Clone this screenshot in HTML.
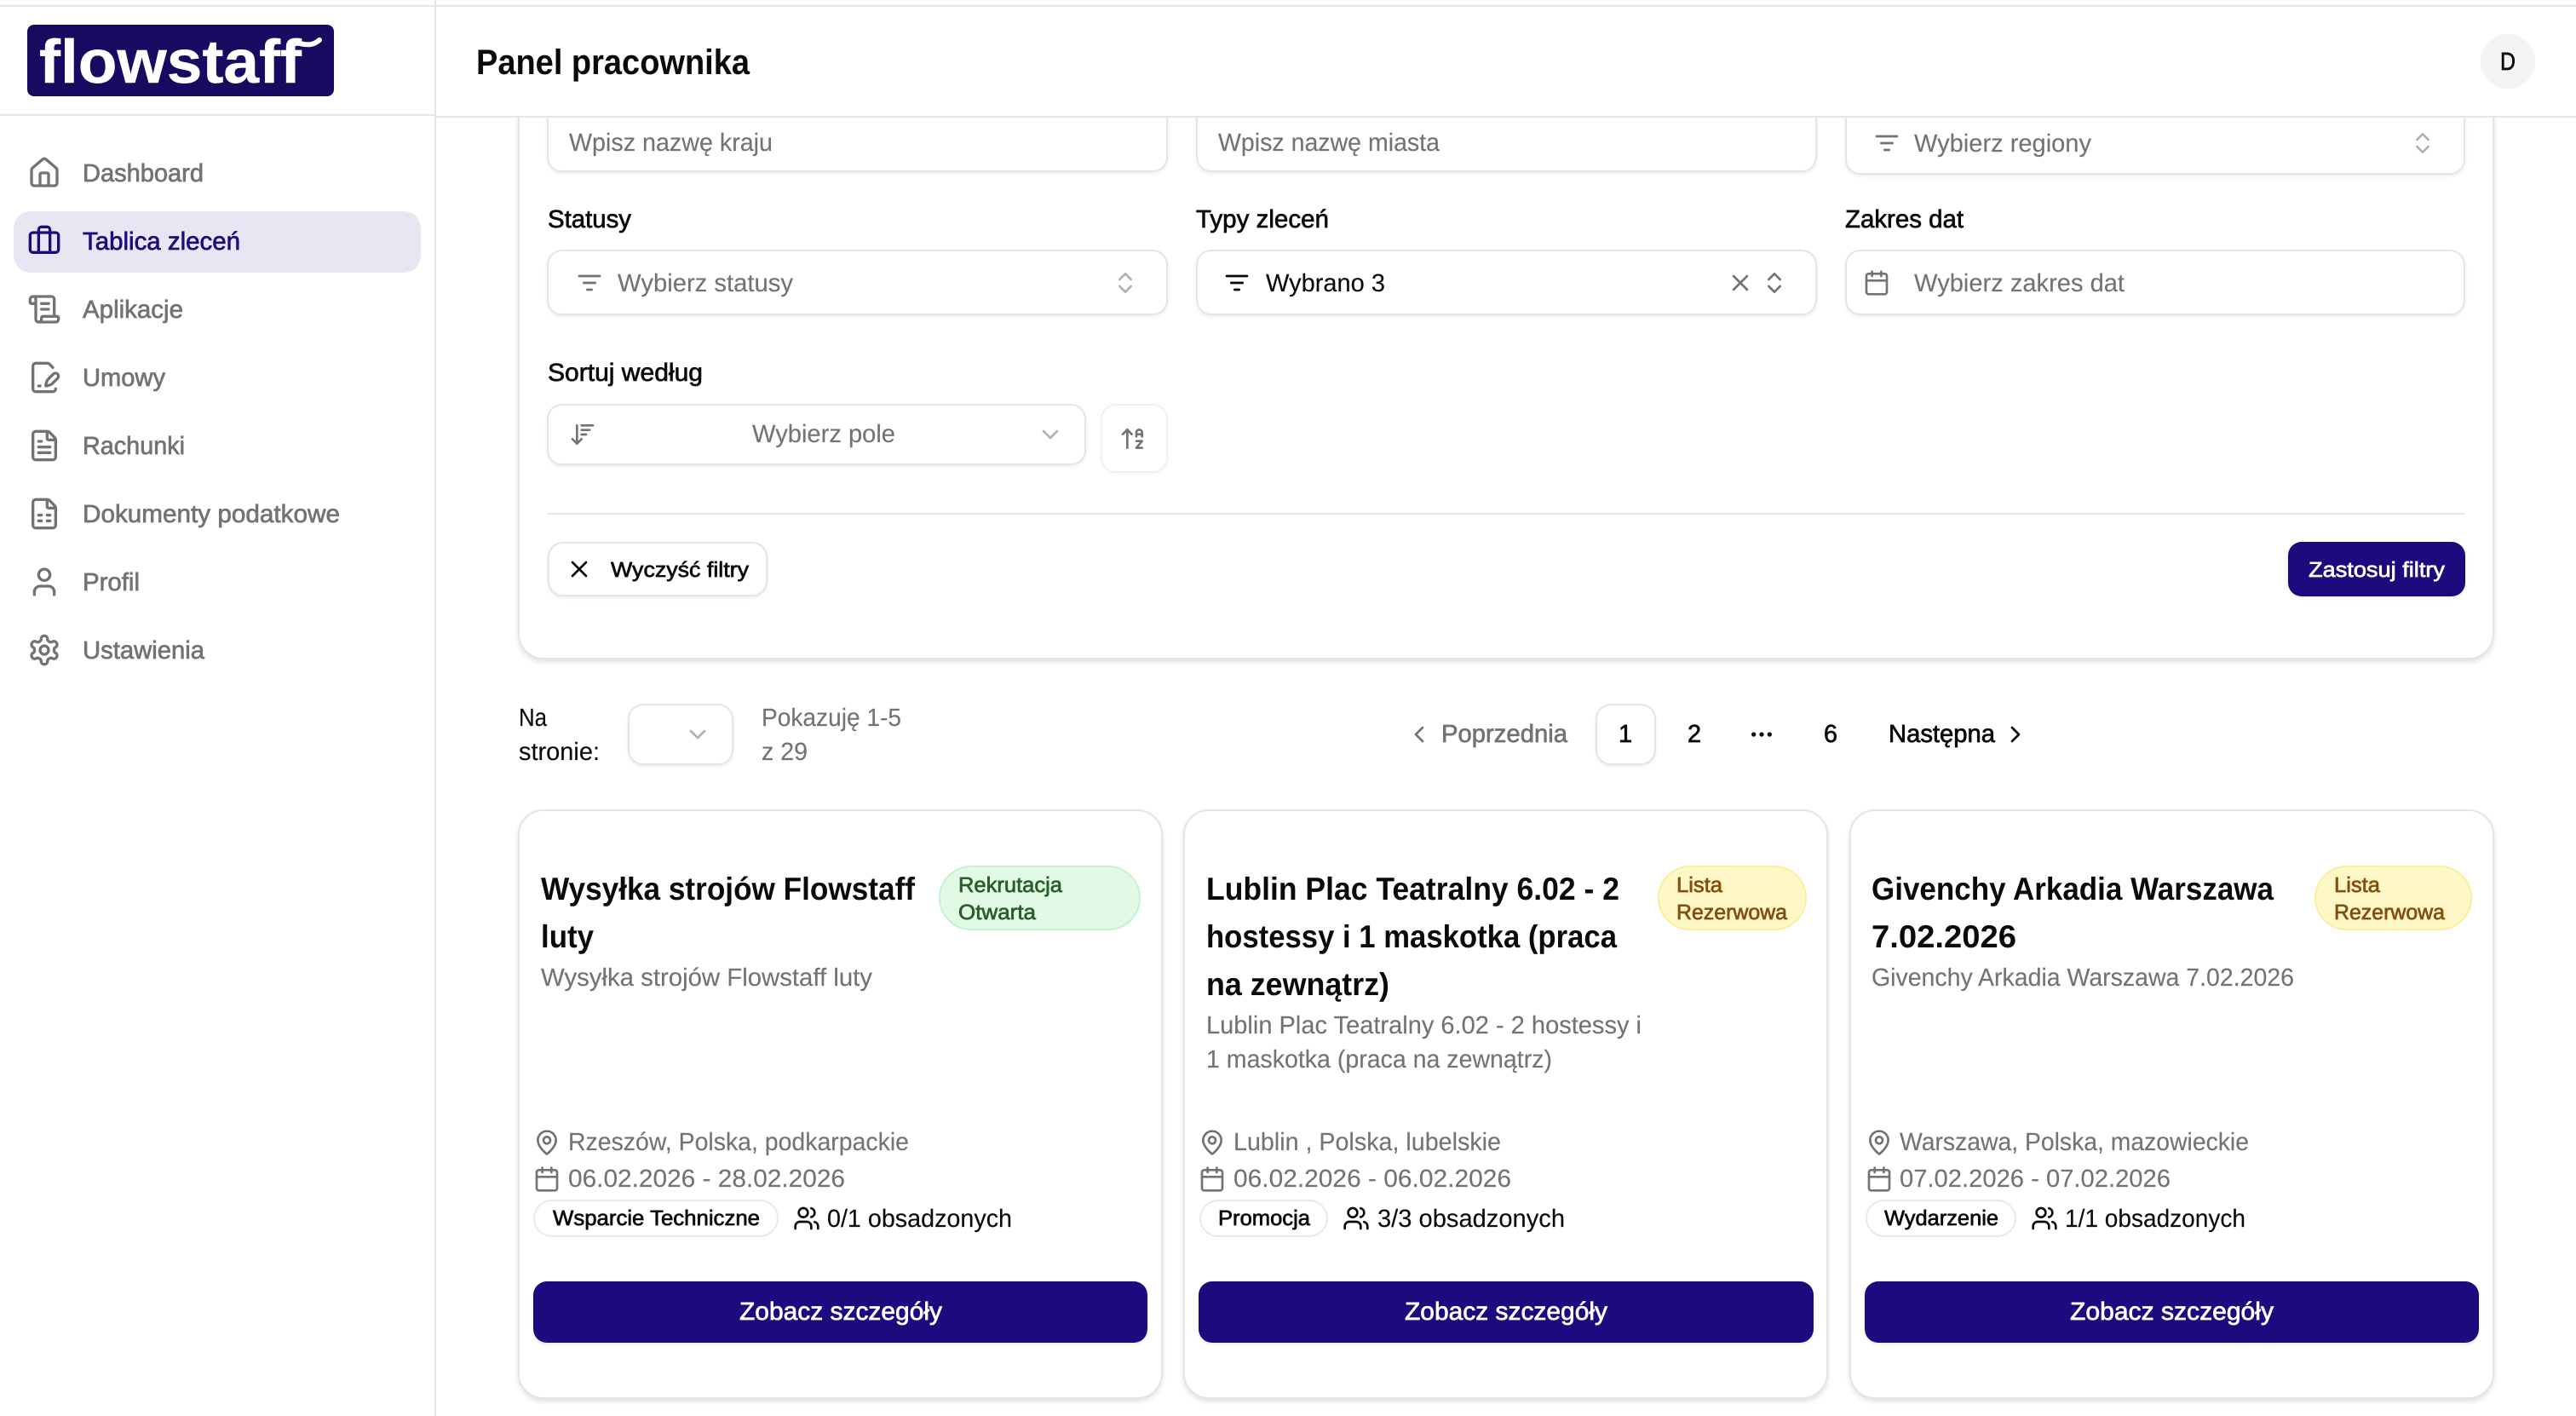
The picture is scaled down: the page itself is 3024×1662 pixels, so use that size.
<!DOCTYPE html>
<html lang="pl">
<head>
<meta charset="utf-8">
<title>Panel pracownika</title>
<style>
html,body{margin:0;padding:0;width:3024px;height:1662px;overflow:hidden;background:#fff;font-family:"Liberation Sans",sans-serif}
.b{position:absolute;box-sizing:border-box;background:#fff}
.f{border:2px solid #e5e5e5;border-radius:18px;box-shadow:0 2px 4px rgba(0,0,0,.07)}
.c{border:2px solid #e5e5e5;border-radius:30px;box-shadow:0 3px 6px rgba(0,0,0,.12)}
.p{background:#1e0a7e;border-radius:16px;box-shadow:0 2px 4px rgba(0,0,0,.08)}
.t{border:2px solid #e8e8ee;border-radius:22px}
.gb{background:#e2f9e6;border:2px solid #c3f3cf;border-radius:38px}
.yb{background:#fdf8c5;border:2px solid #fbee9f;border-radius:38px}
svg.o{position:absolute;left:0;top:0}
text{font-family:"Liberation Sans",sans-serif;font-size:29.3px;text-rendering:geometricPrecision}
.g{fill:#737373;stroke:#737373;stroke-width:.15px}
.k{fill:#0a0a0a;stroke:#0a0a0a;stroke-width:.15px}
.w{fill:#fff;stroke:#fff;stroke-width:.15px}
.n{fill:#1e0a7e;stroke:#1e0a7e;stroke-width:.15px}
.gt{fill:#256029;stroke:#256029;stroke-width:.15px}
.yt{fill:#854d0e;stroke:#854d0e;stroke-width:.15px}
.m{stroke-width:.7px}
.s{font-size:25px}
.h{font-size:37.5px;font-weight:700;stroke-width:0}
.ic{fill:none;stroke:#737373;stroke-width:2;stroke-linecap:round;stroke-linejoin:round}
.ik{fill:none;stroke:#0a0a0a;stroke-width:2;stroke-linecap:round;stroke-linejoin:round}
.in{fill:none;stroke:#1e0a7e;stroke-width:2;stroke-linecap:round;stroke-linejoin:round}
.il{fill:none;stroke:#737373;stroke-width:2;stroke-linecap:round;stroke-linejoin:round;opacity:.55}
</style>
</head>
<body>
<!-- filter panel -->
<div class="b c" style="left:608px;top:60px;width:2320px;height:714px"></div>
<div class="b f" style="left:642px;top:100px;width:729px;height:102px"></div>
<div class="b f" style="left:1404px;top:100px;width:729px;height:102px"></div>
<div class="b f" style="left:2166px;top:100px;width:728px;height:105px"></div>
<div class="b f" style="left:642px;top:293px;width:729px;height:77px"></div>
<div class="b f" style="left:1404px;top:293px;width:729px;height:77px"></div>
<div class="b f" style="left:2166px;top:293px;width:728px;height:77px"></div>
<div class="b f" style="left:642px;top:474px;width:633px;height:72px"></div>
<div class="b f" style="left:1292px;top:474px;width:79px;height:81px;border-color:#f1f1f1;box-shadow:0 2px 4px rgba(0,0,0,.03)"></div>
<div class="b" style="left:642px;top:602px;width:2252px;height:2px;background:#e5e5e5"></div>
<div class="b f" style="left:643px;top:636px;width:258px;height:64px"></div>
<div class="b p" style="left:2686px;top:636px;width:208px;height:64px"></div>
<!-- pagination -->
<div class="b f" style="left:737px;top:826px;width:124px;height:72px"></div>
<div class="b f" style="left:1873px;top:826px;width:71px;height:72px"></div>
<!-- cards -->
<div class="b c" style="left:608px;top:950px;width:757px;height:692px"></div>
<div class="b c" style="left:1389px;top:950px;width:757px;height:692px"></div>
<div class="b c" style="left:2171px;top:950px;width:757px;height:692px"></div>
<div class="b gb" style="left:1102px;top:1016px;width:237px;height:76px"></div>
<div class="b yb" style="left:1946px;top:1016px;width:175px;height:76px"></div>
<div class="b yb" style="left:2717px;top:1016px;width:185px;height:76px"></div>
<div class="b t" style="left:626px;top:1408px;width:288px;height:44px"></div>
<div class="b t" style="left:1408px;top:1408px;width:151px;height:44px"></div>
<div class="b t" style="left:2190px;top:1408px;width:177px;height:44px"></div>
<div class="b p" style="left:626px;top:1504px;width:721px;height:72px"></div>
<div class="b p" style="left:1407px;top:1504px;width:722px;height:72px"></div>
<div class="b p" style="left:2189px;top:1504px;width:721px;height:72px"></div>
<!-- header -->
<div class="b" style="left:512px;top:0;width:2512px;height:138px;border-bottom:2px solid #e5e5e5"></div>
<div class="b" style="left:2912px;top:40px;width:64px;height:64px;border-radius:50%;background:#f4f4f5"></div>
<!-- sidebar -->
<div class="b" style="left:0;top:0;width:512px;height:1662px;border-right:2px solid #e5e5e5"></div>
<div class="b" style="left:0;top:134px;width:510px;height:2px;background:#e5e5e5"></div>
<div class="b" style="left:0;top:6px;width:3024px;height:2px;background:#e5e5e5"></div>
<div class="b" style="left:32px;top:29px;width:360px;height:84px;border-radius:8px;background:#170a60"></div>
<div class="b" style="left:16px;top:248px;width:478px;height:72px;border-radius:20px;background:#e8e6f3"></div>

<svg class="o" width="3024" height="1662" viewBox="0 0 3024 1662" xmlns="http://www.w3.org/2000/svg">
<defs>
<symbol id="home" viewBox="0 0 24 24"><path d="M15 21v-8a1 1 0 0 0-1-1h-4a1 1 0 0 0-1 1v8"/><path d="M3 10a2 2 0 0 1 .709-1.528l7-5.999a2 2 0 0 1 2.582 0l7 5.999A2 2 0 0 1 21 10v9a2 2 0 0 1-2 2H5a2 2 0 0 1-2-2z"/></symbol>
<symbol id="brief" viewBox="0 0 24 24"><path d="M16 20V4a2 2 0 0 0-2-2h-4a2 2 0 0 0-2 2v16"/><rect x="2" y="6" width="20" height="14" rx="2"/></symbol>
<symbol id="scroll" viewBox="0 0 24 24"><path d="M15 12h-5"/><path d="M15 8h-5"/><path d="M19 17V5a2 2 0 0 0-2-2H4"/><path d="M8 21h12a2 2 0 0 0 2-2v-1a1 1 0 0 0-1-1H11a1 1 0 0 0-1 1v1a2 2 0 1 1-4 0V5a2 2 0 1 0-4 0v2a1 1 0 0 0 1 1h3"/></symbol>
<symbol id="pen" viewBox="0 0 24 24"><path d="m18 5-2.414-2.414A2 2 0 0 0 14.172 2H6a2 2 0 0 0-2 2v16a2 2 0 0 0 2 2h12a2 2 0 0 0 2-2"/><path d="M21.378 12.626a1 1 0 0 0-3.004-3.004l-4.01 4.012a2 2 0 0 0-.506.854l-.837 2.87a.5.5 0 0 0 .62.62l2.87-.837a2 2 0 0 0 .854-.506z"/><path d="M8 18h1"/></symbol>
<symbol id="doc" viewBox="0 0 24 24"><path d="M6 22a2 2 0 0 1-2-2V4a2 2 0 0 1 2-2h8a2.4 2.4 0 0 1 1.706.706l3.588 3.588A2.4 2.4 0 0 1 20 8v12a2 2 0 0 1-2 2z"/><path d="M14 2v5a1 1 0 0 0 1 1h5"/><path d="M10 9H8"/><path d="M16 13H8"/><path d="M16 17H8"/></symbol>
<symbol id="tax" viewBox="0 0 24 24"><path d="M6 22a2 2 0 0 1-2-2V4a2 2 0 0 1 2-2h8a2.4 2.4 0 0 1 1.706.706l3.588 3.588A2.4 2.4 0 0 1 20 8v12a2 2 0 0 1-2 2z"/><path d="M14 2v5a1 1 0 0 0 1 1h5"/><path d="M8 13h2"/><path d="M14 13h2"/><path d="M8 17h2"/><path d="M14 17h2"/></symbol>
<symbol id="user" viewBox="0 0 24 24"><path d="M19 21v-2a4 4 0 0 0-4-4H9a4 4 0 0 0-4 4v2"/><circle cx="12" cy="7" r="4"/></symbol>
<symbol id="gear" viewBox="0 0 24 24"><path d="M12.22 2h-.44a2 2 0 0 0-2 2v.18a2 2 0 0 1-1 1.73l-.43.25a2 2 0 0 1-2 0l-.15-.08a2 2 0 0 0-2.73.73l-.22.38a2 2 0 0 0 .73 2.73l.15.1a2 2 0 0 1 1 1.72v.51a2 2 0 0 1-1 1.74l-.15.09a2 2 0 0 0-.73 2.73l.22.38a2 2 0 0 0 2.73.73l.15-.08a2 2 0 0 1 2 0l.43.25a2 2 0 0 1 1 1.73V20a2 2 0 0 0 2 2h.44a2 2 0 0 0 2-2v-.18a2 2 0 0 1 1-1.73l.43-.25a2 2 0 0 1 2 0l.15.08a2 2 0 0 0 2.73-.73l.22-.39a2 2 0 0 0-.73-2.73l-.15-.08a2 2 0 0 1-1-1.74v-.5a2 2 0 0 1 1-1.74l.15-.09a2 2 0 0 0 .73-2.73l-.22-.38a2 2 0 0 0-2.73-.73l-.15.08a2 2 0 0 1-2 0l-.43-.25a2 2 0 0 1-1-1.73V4a2 2 0 0 0-2-2z"/><circle cx="12" cy="12" r="3"/></symbol>
<symbol id="filter" viewBox="0 0 24 24"><path d="M3 6h18"/><path d="M7 12h10"/><path d="M10 18h4"/></symbol>
<symbol id="updown" viewBox="0 0 24 24"><path d="m7 15 5 5 5-5"/><path d="m7 9 5-5 5 5"/></symbol>
<symbol id="down" viewBox="0 0 24 24"><path d="m6 9 6 6 6-6"/></symbol>
<symbol id="x" viewBox="0 0 24 24"><path d="M18 6 6 18"/><path d="m6 6 12 12"/></symbol>
<symbol id="cal" viewBox="0 0 24 24"><path d="M8 2v4"/><path d="M16 2v4"/><rect x="3" y="4" width="18" height="18" rx="2"/><path d="M3 10h18"/></symbol>
<symbol id="pin" viewBox="0 0 24 24"><path d="M20 10c0 4.993-5.539 10.193-7.399 11.799a1 1 0 0 1-1.202 0C9.539 20.193 4 14.993 4 10a8 8 0 0 1 16 0"/><circle cx="12" cy="10" r="3"/></symbol>
<symbol id="users" viewBox="0 0 24 24"><path d="M16 21v-2a4 4 0 0 0-4-4H6a4 4 0 0 0-4 4v2"/><circle cx="9" cy="7" r="4"/><path d="M22 21v-2a4 4 0 0 0-3-3.87"/><path d="M16 3.13a4 4 0 0 1 0 7.75"/></symbol>
<symbol id="sort" viewBox="0 0 24 24"><path d="m3 16 4 4 4-4"/><path d="M7 20V4"/><path d="M11 4h10"/><path d="M11 8h7"/><path d="M11 12h4"/></symbol>
<symbol id="az" viewBox="0 0 24 24"><path d="m3 8 4-4 4 4"/><path d="M7 4v16"/><path d="M20 8h-5"/><path d="M15 10V6.5a2.5 2.5 0 0 1 5 0V10"/><path d="M15 14h5l-5 6h5"/></symbol>
<symbol id="left" viewBox="0 0 24 24"><path d="m15 18-6-6 6-6"/></symbol>
<symbol id="right" viewBox="0 0 24 24"><path d="m9 18 6-6-6-6"/></symbol>
<symbol id="dots" viewBox="0 0 24 24"><circle cx="12" cy="12" r="1"/><circle cx="19" cy="12" r="1"/><circle cx="5" cy="12" r="1"/></symbol>
</defs>

<!-- logo -->
<text x="46" y="97" textLength="308" lengthAdjust="spacingAndGlyphs" style="font-size:72px;font-weight:700;fill:#fff;stroke:#fff;stroke-width:.4px">flowstaff</text>
<path d="M342 53c9-7 19 6 33-6" fill="none" stroke="#fff" stroke-width="6" stroke-linecap="round"/>

<!-- sidebar icons -->
<use href="#home" class="ic" x="32" y="183" width="40" height="40"/>
<use href="#brief" class="in" x="32" y="263" width="40" height="40"/>
<use href="#scroll" class="ic" x="32" y="343" width="40" height="40"/>
<use href="#pen" class="ic" x="32" y="423" width="40" height="40"/>
<use href="#doc" class="ic" x="32" y="503" width="40" height="40"/>
<use href="#tax" class="ic" x="32" y="583" width="40" height="40"/>
<use href="#user" class="ic" x="32" y="663" width="40" height="40"/>
<use href="#gear" class="ic" x="32" y="743" width="40" height="40"/>

<!-- sidebar text -->
<text class="g m" x="97" y="213" textLength="142" lengthAdjust="spacingAndGlyphs">Dashboard</text>
<text class="n m" x="97" y="293" textLength="185" lengthAdjust="spacingAndGlyphs">Tablica zleceń</text>
<text class="g m" x="97" y="373" textLength="118" lengthAdjust="spacingAndGlyphs">Aplikacje</text>
<text class="g m" x="97" y="453" textLength="97" lengthAdjust="spacingAndGlyphs">Umowy</text>
<text class="g m" x="97" y="533" textLength="120" lengthAdjust="spacingAndGlyphs">Rachunki</text>
<text class="g m" x="97" y="613" textLength="302" lengthAdjust="spacingAndGlyphs">Dokumenty podatkowe</text>
<text class="g m" x="97" y="693" textLength="67" lengthAdjust="spacingAndGlyphs">Profil</text>
<text class="g m" x="97" y="773" textLength="143" lengthAdjust="spacingAndGlyphs">Ustawienia</text>

<!-- header -->
<text x="559" y="87" textLength="321" lengthAdjust="spacingAndGlyphs" style="font-size:41.5px;font-weight:700;fill:#0a0a0a">Panel pracownika</text>
<text class="k m" x="2935" y="82" textLength="18" lengthAdjust="spacingAndGlyphs">D</text>

<!-- filters row 1 -->
<text class="g" x="668" y="177" textLength="239" lengthAdjust="spacingAndGlyphs">Wpisz nazwę kraju</text>
<text class="g" x="1430" y="177" textLength="260" lengthAdjust="spacingAndGlyphs">Wpisz nazwę miasta</text>
<use href="#filter" class="ic" x="2199" y="152" width="32" height="32"/>
<text class="g" x="2247" y="178" textLength="208" lengthAdjust="spacingAndGlyphs">Wybierz regiony</text>
<use href="#updown" class="il" x="2828" y="152" width="32" height="32"/>

<!-- filters row 2 -->
<text class="k m" x="643" y="267" textLength="98" lengthAdjust="spacingAndGlyphs">Statusy</text>
<text class="k m" x="1404" y="267" textLength="156" lengthAdjust="spacingAndGlyphs">Typy zleceń</text>
<text class="k m" x="2166" y="267" textLength="139" lengthAdjust="spacingAndGlyphs">Zakres dat</text>
<use href="#filter" class="ic" x="676" y="316" width="32" height="32"/>
<text class="g" x="725" y="342" textLength="206" lengthAdjust="spacingAndGlyphs">Wybierz statusy</text>
<use href="#updown" class="il" x="1305" y="316" width="32" height="32"/>
<use href="#filter" class="ik" x="1436" y="316" width="32" height="32"/>
<text class="k" x="1486" y="342" textLength="140" lengthAdjust="spacingAndGlyphs">Wybrano 3</text>
<use href="#x" class="ic" x="2027" y="316" width="32" height="32"/>
<use href="#updown" class="ic" x="2067" y="316" width="32" height="32"/>
<use href="#cal" class="ic" x="2187" y="316" width="32" height="32"/>
<text class="g" x="2247" y="342" textLength="247" lengthAdjust="spacingAndGlyphs">Wybierz zakres dat</text>

<!-- sort -->
<text class="k m" x="643" y="447" textLength="182" lengthAdjust="spacingAndGlyphs">Sortuj według</text>
<use href="#sort" class="ic" x="668" y="494" width="32" height="32"/>
<text class="g" x="883" y="519" textLength="168" lengthAdjust="spacingAndGlyphs">Wybierz pole</text>
<use href="#down" class="il" x="1217" y="494" width="32" height="32"/>
<use href="#az" class="ic" x="1314" y="499" width="32" height="32"/>

<!-- filter buttons -->
<use href="#x" class="ik" x="664" y="652" width="32" height="32"/>
<text class="k m s" x="717" y="677" textLength="162" lengthAdjust="spacingAndGlyphs">Wyczyść filtry</text>
<text class="w m s" x="2710" y="677" textLength="160" lengthAdjust="spacingAndGlyphs">Zastosuj filtry</text>

<!-- per page -->
<text class="k" x="609" y="852" textLength="33" lengthAdjust="spacingAndGlyphs">Na</text>
<text class="k" x="609" y="892" textLength="95" lengthAdjust="spacingAndGlyphs">stronie:</text>
<use href="#down" class="il" x="803" y="846" width="32" height="32"/>
<text class="g" x="894" y="852" textLength="164" lengthAdjust="spacingAndGlyphs">Pokazuję 1-5</text>
<text class="g" x="894" y="892" textLength="54" lengthAdjust="spacingAndGlyphs">z 29</text>

<!-- pagination -->
<use href="#left" class="ic" x="1650" y="846" width="32" height="32"/>
<text class="g m" x="1692" y="871" textLength="148" lengthAdjust="spacingAndGlyphs">Poprzednia</text>
<text class="k m" x="1900" y="871" textLength="16" lengthAdjust="spacingAndGlyphs">1</text>
<text class="k m" x="1981" y="871" textLength="16" lengthAdjust="spacingAndGlyphs">2</text>
<use href="#dots" class="ik" x="2052" y="846" width="32" height="32"/>
<text class="k m" x="2141" y="871" textLength="16" lengthAdjust="spacingAndGlyphs">6</text>
<text class="k m" x="2217" y="871" textLength="125" lengthAdjust="spacingAndGlyphs">Następna</text>
<use href="#right" class="ik" x="2350" y="846" width="32" height="32"/>

<!-- card 1 -->
<text class="h k" x="635" y="1056" textLength="439" lengthAdjust="spacingAndGlyphs">Wysyłka strojów Flowstaff</text>
<text class="h k" x="635" y="1112" textLength="62" lengthAdjust="spacingAndGlyphs">luty</text>
<text class="g" x="635" y="1157" textLength="389" lengthAdjust="spacingAndGlyphs">Wysyłka strojów Flowstaff luty</text>
<text class="gt m s" x="1125" y="1047" textLength="122" lengthAdjust="spacingAndGlyphs">Rekrutacja</text>
<text class="gt m s" x="1125" y="1079" textLength="91" lengthAdjust="spacingAndGlyphs">Otwarta</text>
<use href="#pin" class="ic" x="626" y="1325" width="32" height="32"/>
<text class="g" x="667" y="1350" textLength="400" lengthAdjust="spacingAndGlyphs">Rzeszów, Polska, podkarpackie</text>
<use href="#cal" class="ic" x="626" y="1368" width="32" height="32"/>
<text class="g" x="667" y="1393" textLength="325" lengthAdjust="spacingAndGlyphs">06.02.2026 - 28.02.2026</text>
<text class="k m s" x="649" y="1438" textLength="243" lengthAdjust="spacingAndGlyphs">Wsparcie Techniczne</text>
<use href="#users" class="ik" x="931" y="1414" width="32" height="32"/>
<text class="k" x="971" y="1440" textLength="217" lengthAdjust="spacingAndGlyphs">0/1 obsadzonych</text>
<text class="w m" x="868" y="1549" textLength="238" lengthAdjust="spacingAndGlyphs">Zobacz szczegóły</text>

<!-- card 2 -->
<text class="h k" x="1416" y="1056" textLength="485" lengthAdjust="spacingAndGlyphs">Lublin Plac Teatralny 6.02 - 2</text>
<text class="h k" x="1416" y="1112" textLength="482" lengthAdjust="spacingAndGlyphs">hostessy i 1 maskotka (praca</text>
<text class="h k" x="1416" y="1168" textLength="215" lengthAdjust="spacingAndGlyphs">na zewnątrz)</text>
<text class="g" x="1416" y="1213" textLength="511" lengthAdjust="spacingAndGlyphs">Lublin Plac Teatralny 6.02 - 2 hostessy i</text>
<text class="g" x="1416" y="1253" textLength="406" lengthAdjust="spacingAndGlyphs">1 maskotka (praca na zewnątrz)</text>
<text class="yt m s" x="1968" y="1047" textLength="54" lengthAdjust="spacingAndGlyphs">Lista</text>
<text class="yt m s" x="1968" y="1079" textLength="130" lengthAdjust="spacingAndGlyphs">Rezerwowa</text>
<use href="#pin" class="ic" x="1407" y="1325" width="32" height="32"/>
<text class="g" x="1448" y="1350" textLength="314" lengthAdjust="spacingAndGlyphs">Lublin , Polska, lubelskie</text>
<use href="#cal" class="ic" x="1407" y="1368" width="32" height="32"/>
<text class="g" x="1448" y="1393" textLength="326" lengthAdjust="spacingAndGlyphs">06.02.2026 - 06.02.2026</text>
<text class="k m s" x="1430" y="1438" textLength="108" lengthAdjust="spacingAndGlyphs">Promocja</text>
<use href="#users" class="ik" x="1576" y="1414" width="32" height="32"/>
<text class="k" x="1617" y="1440" textLength="220" lengthAdjust="spacingAndGlyphs">3/3 obsadzonych</text>
<text class="w m" x="1649" y="1549" textLength="238" lengthAdjust="spacingAndGlyphs">Zobacz szczegóły</text>

<!-- card 3 -->
<text class="h k" x="2197" y="1056" textLength="472" lengthAdjust="spacingAndGlyphs">Givenchy Arkadia Warszawa</text>
<text class="h k" x="2197" y="1112" textLength="170" lengthAdjust="spacingAndGlyphs">7.02.2026</text>
<text class="g" x="2197" y="1157" textLength="496" lengthAdjust="spacingAndGlyphs">Givenchy Arkadia Warszawa 7.02.2026</text>
<text class="yt m s" x="2740" y="1047" textLength="54" lengthAdjust="spacingAndGlyphs">Lista</text>
<text class="yt m s" x="2740" y="1079" textLength="130" lengthAdjust="spacingAndGlyphs">Rezerwowa</text>
<use href="#pin" class="ic" x="2190" y="1325" width="32" height="32"/>
<text class="g" x="2230" y="1350" textLength="410" lengthAdjust="spacingAndGlyphs">Warszawa, Polska, mazowieckie</text>
<use href="#cal" class="ic" x="2190" y="1368" width="32" height="32"/>
<text class="g" x="2230" y="1393" textLength="318" lengthAdjust="spacingAndGlyphs">07.02.2026 - 07.02.2026</text>
<text class="k m s" x="2212" y="1438" textLength="134" lengthAdjust="spacingAndGlyphs">Wydarzenie</text>
<use href="#users" class="ik" x="2384" y="1414" width="32" height="32"/>
<text class="k" x="2424" y="1440" textLength="212" lengthAdjust="spacingAndGlyphs">1/1 obsadzonych</text>
<text class="w m" x="2430" y="1549" textLength="239" lengthAdjust="spacingAndGlyphs">Zobacz szczegóły</text>
</svg>
</body>
</html>
